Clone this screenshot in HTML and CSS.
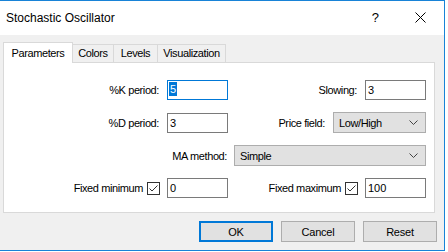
FILE: index.html
```html
<!DOCTYPE html>
<html lang="en">
<head>
  <meta charset="UTF-8" />
  <title>Stochastic Oscillator</title>
  <link rel="stylesheet" href="styles.css">
</head>
<body>

  <div class="window">
    <!-- title bar -->
    <div class="titlebar">
      <span class="title">Stochastic Oscillator</span>
      <span class="help">?</span>
      <span class="close">
        <svg width="11" height="11" viewBox="0 0 11 11"><path d="M0.5 0.5L10.5 10.5M10.5 0.5L0.5 10.5" stroke="#000" stroke-width="1" fill="none"/></svg>
      </span>
    </div>

    <div class="content">
      <div class="tabs">
        <div class="tab active">Parameters</div>
        <div class="tab tab-colors">Colors</div>
        <div class="tab tab-levels">Levels</div>
        <div class="tab tab-vis">Visualization</div>
      </div>

      <div class="panel">
        <div class="row">
          <div class="cell left">
            <label>%K period:</label>
            <div class="input focused"><span class="selected">5</span></div>
          </div>
          <div class="cell right">
            <label>Slowing:</label>
            <div class="input">3</div>
          </div>
        </div>

        <div class="row row-tall">
          <div class="cell left">
            <label>%D period:</label>
            <div class="input">3</div>
          </div>
          <div class="cell right">
            <label>Price field:</label>
            <div class="select select-price">
              <span>Low/High</span>
              <svg width="9" height="5" viewBox="0 0 9 5"><path d="M0.5 0.5L4.5 4.5L8.5 0.5" stroke="#444" fill="none"/></svg>
            </div>
          </div>
        </div>

        <div class="row row-tall row-full">
          <label>MA method:</label>
          <div class="select select-ma">
            <span>Simple</span>
            <svg width="9" height="5" viewBox="0 0 9 5"><path d="M0.5 0.5L4.5 4.5L8.5 0.5" stroke="#444" fill="none"/></svg>
          </div>
        </div>

        <div class="row">
          <div class="cell left">
            <label>Fixed minimum</label>
            <span class="check"><svg width="11" height="11" viewBox="0 0 11 11"><path d="M1.5 5.5L4 8L9.5 2.5" stroke="#333" fill="none"/></svg></span>
            <div class="input">0</div>
          </div>
          <div class="cell right">
            <label>Fixed maximum</label>
            <span class="check"><svg width="11" height="11" viewBox="0 0 11 11"><path d="M1.5 5.5L4 8L9.5 2.5" stroke="#333" fill="none"/></svg></span>
            <div class="input">100</div>
          </div>
        </div>
      </div>

      <div class="buttons">
        <button class="btn default">OK</button>
        <button class="btn">Cancel</button>
        <button class="btn">Reset</button>
      </div>
    </div>
  </div>

</body>
</html>
```

FILE: styles.css
```css
body {
  margin: 0;
  background: #fff;
  font-family: "Liberation Sans", Arial, sans-serif;
  font-size: 11px;
  color: #000;
}
.window {
  width: 444px;
  height: 249px;
  border: 1px solid #1883d7;
  border-left: none;
  display: flex;
  flex-direction: column;
}
.titlebar {
  height: 34px;
  background: #fff;
  display: flex;
  align-items: center;
  flex-shrink: 0;
}
.title {
  margin-left: 6px;
  font-size: 12px;
}
.help {
  margin-left: auto;
  font-size: 13px;
  margin-right: 36px;
  margin-top: -1px;
}
.close {
  display: flex;
  margin-right: 18px;
  margin-top: -1px;
}
.content {
  flex: 1;
  background: #f0f0f0;
  padding: 7px 0 0 3px;
  letter-spacing: -0.4px;
}
.tabs {
  display: flex;
  height: 21px;
  margin-bottom: -1px;
  position: relative;
  z-index: 1;
}
.tab {
  height: 18px;
  box-sizing: border-box;
  margin-top: 2px;
  border-top: 1px solid #d9d9d9;
  border-right: 1px solid #d9d9d9;
  background: #f0f0f0;
  text-align: center;
  line-height: 17px;
}
.tab.active {
  width: 70px;
  height: 21px;
  margin-top: 0;
  border-left: 1px solid #d9d9d9;
  background: #fff;
  line-height: 20px;
}
.tab-colors { width: 41px; }
.tab-levels { width: 44px; }
.tab-vis { width: 68px; }
.panel {
  width: 432px;
  height: 151px;
  box-sizing: border-box;
  border: 1px solid #d9d9d9;
  background: #fff;
  padding-top: 17px;
}
.row {
  display: grid;
  grid-template-columns: 224px 198px;
  height: 20px;
  margin-top: 12px;
}
.row:first-child {
  margin-top: 0;
}
.row-tall {
  height: 21px;
}
.row-full {
  display: flex;
  width: 422px;
  justify-content: flex-end;
  align-items: center;
  gap: 7px;
}
.cell {
  display: flex;
  justify-content: flex-end;
  align-items: center;
  gap: 8px;
}
.input {
  width: 61px;
  height: 20px;
  box-sizing: border-box;
  border: 1px solid #7a7a7a;
  padding: 0 0 0 2px;
  line-height: 18px;
  letter-spacing: 0;
}
.input.focused {
  border-color: #0078d7;
  padding-left: 1px;
}
.selected {
  display: inline-block;
  background: #0078d7;
  color: #fff;
  padding: 0 1px;
  line-height: 14px;
  vertical-align: 1px;
}
.select {
  height: 21px;
  box-sizing: border-box;
  border: 1px solid #adadad;
  background: #e1e1e1;
  display: flex;
  align-items: center;
  justify-content: space-between;
  padding: 0 7px 0 5px;
}
.select-price { width: 93px; }
.select-ma { width: 192px; }
.check {
  width: 13px;
  height: 13px;
  box-sizing: border-box;
  border: 1px solid #333;
  display: flex;
  margin-left: -4px;
  margin-right: -1px;
}
.buttons {
  display: flex;
  justify-content: flex-end;
  gap: 8px;
  padding-right: 7px;
  margin-top: 8px;
}
.btn {
  width: 74px;
  height: 21px;
  box-sizing: border-box;
  border: 1px solid #adadad;
  background: #e1e1e1;
  font-family: "Liberation Sans", Arial, sans-serif;
  font-size: 11px;
  letter-spacing: -0.2px;
  color: #000;
  padding: 0;
}
.btn.default {
  border: 2px solid #0078d7;
}
```
